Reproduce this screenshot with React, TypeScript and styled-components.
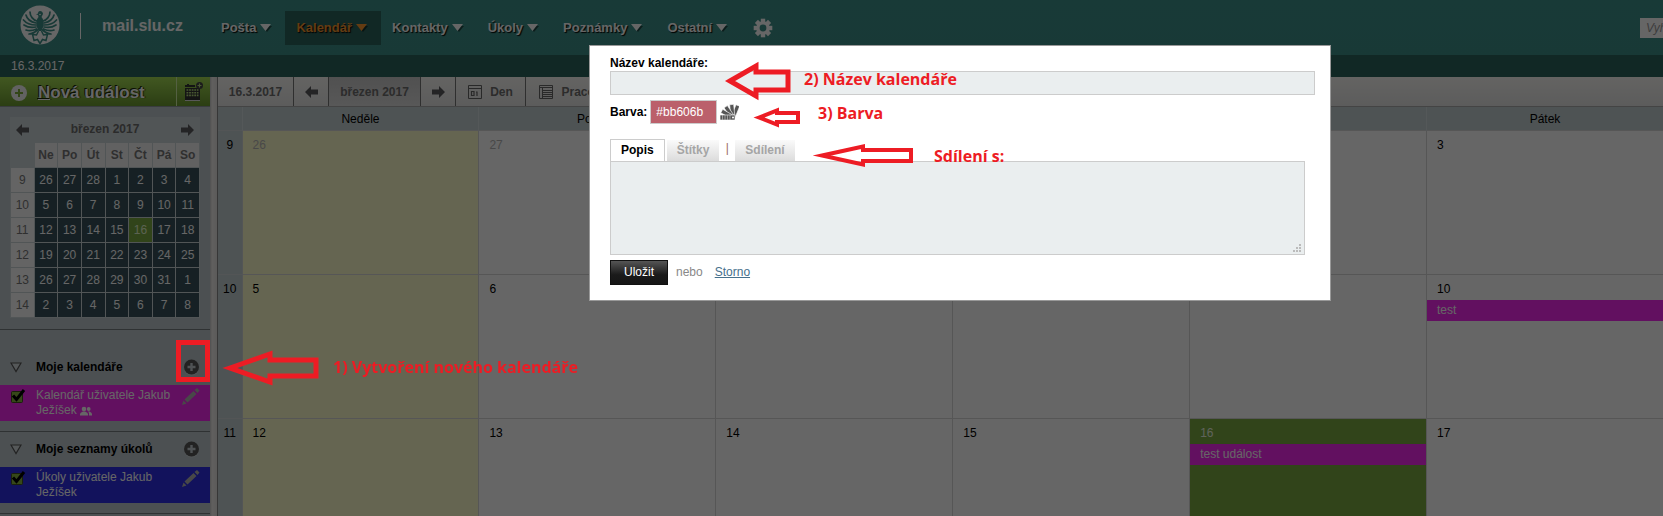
import React from 'react';
import styled, { createGlobalStyle, css } from 'styled-components';

const GlobalStyle = createGlobalStyle`
  *, *::before, *::after { box-sizing: border-box; }
  body {
    margin: 0;
    overflow: hidden;
    font-family: "Liberation Sans", Arial, sans-serif;
    font-size: 12px;
    line-height: 15px;
    color: #000;
  }
  button, input, textarea { font: inherit; }
  button { border: 0; padding: 0; background: none; cursor: pointer; }
  a { color: inherit; text-decoration: none; }
`;

const Page = styled.div`
  display: flex;
  flex-direction: column;
  height: 100vh;
  overflow: hidden;
`;

/* ---------- top bar ---------- */

const Header = styled.header`
  flex: none;
  display: flex;
  align-items: center;
  height: 55px;
  padding-left: 20px;
  background: linear-gradient(#3d918a, #3e9088);
  overflow: hidden;
`;

const Logo = styled.svg`
  flex: none;
  width: 40px;
  height: 40px;
  margin-bottom: 5px;
`;

const Brand = styled.a`
  flex: none;
  width: 130px;
  margin: 0 0 4px 20px;
  padding-left: 21px;
  border-left: 1px solid #fff;
  font-size: 16px;
  font-weight: bold;
  line-height: 26px;
  color: #fff;
`;

const Nav = styled.nav`
  display: flex;
  align-items: center;
`;

const NavItem = styled.a<{ $active?: boolean }>`
  display: flex;
  align-items: center;
  gap: 4px;
  height: 34px;
  padding: 0 13px 0 11px;
  font-size: 13px;
  font-weight: bold;
  color: #fff;
  text-shadow: 1px 1px 1px #000;
  ${(p) => p.$active && css`
    background: #2b645c;
    color: #fa962f;
  `}
`;

const SettingsButton = styled.button`
  display: flex;
  margin-left: 12px;
`;

const Search = styled.input`
  flex: none;
  width: 170px;
  height: 20px;
  margin: 0 -147px 0 auto;
  padding: 0 6px;
  border: 0;
  background: #fff;
  font-style: italic;
  &::placeholder { color: #999; opacity: 1; }
`;

const DateBar = styled.div`
  flex: none;
  height: 22px;
  padding: 4px 11px;
  background: #2c645d;
  color: #fff;
`;

const Body = styled.div`
  flex: 1;
  display: flex;
  align-items: stretch;
  min-height: 0;
`;

/* ---------- sidebar ---------- */

const Sidebar = styled.aside`
  flex: none;
  width: 210px;
  background: #bec8cd;
`;

const NewEventBar = styled.div`
  display: flex;
  height: 30px;
  border-bottom: 1px solid #8e979b;
  background: linear-gradient(#a5db54, #6c9a31);
`;

const NewEvent = styled.button`
  flex: 1;
  display: flex;
  align-items: center;
  gap: 11px;
  padding: 2px 0 0 11px;
  font-size: 17px;
  font-weight: bold;
  line-height: 20px;
  color: #fff;
  text-shadow: -1px -1px 0 #1c2a08, 1px 0 1px #2e4412;
`;

const QuickEvent = styled.button`
  display: flex;
  align-items: center;
  justify-content: center;
  width: 34px;
  border-left: 1px solid #d3efa5;
`;

const MiniCalendar = styled.section`
  margin: 10px 10px 11px;
  background: #cbd5d8;
`;

const MiniHead = styled.div`
  display: flex;
  align-items: center;
  justify-content: space-between;
  height: 25px;
  padding: 0 6px;
  font-weight: bold;
  color: #6b6b6b;
`;

const IconButton = styled.button`
  display: flex;
  flex: none;
`;

const MiniTable = styled.table`
  width: 190px;
  border-collapse: separate;
  border-spacing: 1px;
  table-layout: fixed;
  th, td { height: 24px; padding: 0; text-align: center; }
  thead th { background: #f2f2f2; color: #777; }
  thead td { background: none; }
  tbody th { background: #fafafa; color: #777; font-weight: normal; }
  tbody { background: #dadada; }
`;

const MiniDay = styled.td<{ $today?: boolean }>`
  background: ${(p) => (p.$today ? '#7aaa43' : '#37525a')};
  color: ${(p) => (p.$today ? '#e4f5cc' : '#fff')};
`;

const ListSection = styled.section<{ $first?: boolean }>`
  padding: ${(p) => (p.$first ? '20px' : '0')} 0 10px;
  border-top: 1px solid #767d80;
`;

const ListHead = styled.div`
  display: flex;
  align-items: center;
  height: 35px;
  padding: 0 10px;
`;

const ListTitle = styled.h2`
  flex: 1;
  margin: 0 0 0 14px;
  font-size: 12px;
  font-weight: bold;
`;

const ListRow = styled.div<{ $color: string }>`
  display: flex;
  align-items: flex-start;
  height: 36px;
  padding: 3px 10px;
  background: ${(p) => p.$color};
  color: #fff;
`;

const Check = styled.span`
  position: relative;
  display: flex;
  flex: none;
  width: 26px;
  height: 18px;
  svg { pointer-events: none; }
  input { position: absolute; inset: 0; width: 14px; height: 14px; margin: 0; opacity: 0; }
`;

const RowLabel = styled.label`
  flex: 1;
  svg { vertical-align: -2px; }
`;

const Resizer = styled.div`
  flex: none;
  width: 8px;
  border-right: 1px solid #8b8b8b;
  background: linear-gradient(90deg, #c9c9c9, #f2eeec 30%, #e4e2e0);
`;

/* ---------- month view ---------- */

const Main = styled.main`
  flex: 1;
  min-width: 0;
  background: #fff;
  overflow: hidden;
`;

const Toolbar = styled.div`
  display: flex;
  height: 30px;
  border-bottom: 1px solid #aaa;
  background: linear-gradient(#faf9f5, #e6e6e6);
`;

const Tool = styled.button<{ $w: number; $pressed?: boolean }>`
  flex: none;
  display: flex;
  align-items: center;
  justify-content: center;
  gap: 8px;
  width: ${(p) => p.$w}px;
  padding-top: 1px;
  border-right: 1px solid #777;
  font-weight: bold;
  color: #6e6e6e;
  white-space: nowrap;
  ${(p) => p.$pressed && css`
    background: linear-gradient(#c9c9c9, #dcdcdc);
  `}
`;

const MonthTable = styled.table`
  width: calc(100% + 1px);
  border-collapse: collapse;
  table-layout: fixed;
  thead th {
    height: 23px;
    padding: 2px 0 0;
    border-right: 1px solid #d3dcdf;
    background: #c3cfd2;
    font-weight: normal;
  }
  col:first-child { width: 24px; }
`;

const WeekNumber = styled.th`
  height: 144px;
  padding: 7px 0;
  border: 1px solid #d0d4d6;
  border-left: 0;
  background: #c3cfd2;
  font-weight: normal;
  text-align: center;
  vertical-align: top;
`;

const Day = styled.td<{ $kind?: string }>`
  height: 144px;
  padding: 0;
  border: 1px solid #d8d8d8;
  vertical-align: top;
  background: ${(p) => (p.$kind === 'today' ? '#7aaa43' : p.$kind === 'sunday' ? '#fdfdca' : '#fff')};
  color: ${(p) => (p.$kind === 'today' ? '#eef7e2' : '#000')};
`;

const DayNumber = styled.div<{ $muted?: boolean }>`
  height: 25px;
  padding: 7px 10px 0;
  color: ${(p) => (p.$muted ? '#b5b5b5' : 'inherit')};
`;

const Event = styled.a`
  display: block;
  padding: 3px 10px;
  background: #f528f0;
  color: #fff;
`;

/* ---------- dialog ---------- */

const Backdrop = styled.div`
  position: fixed;
  inset: 0;
  background: rgba(0, 0, 0, 0.6);
`;

const Dialog = styled.form`
  position: absolute;
  top: 45px;
  left: 589px;
  width: 742px;
  padding: 10px 15px 15px 20px;
  border: 1px solid #999;
  background: #fff;
`;

const FieldLabel = styled.label`
  display: block;
  font-weight: bold;
`;

const NameInput = styled.input`
  display: block;
  width: 100%;
  height: 24px;
  padding: 0 6px;
  border: 1px solid #ccc;
  background: #eaeeef;
`;

const ColorRow = styled.div`
  display: flex;
  align-items: center;
  gap: 3px;
  margin: 5px 0 15px;
`;

const ColorInput = styled.input`
  width: 67px;
  height: 24px;
  padding: 0 5px;
  border: 1px solid #ccc;
  background: #bb606b;
  color: #fff;
`;

const Tabs = styled.div`
  display: flex;
  align-items: flex-end;
  height: 22px;
`;

const Tab = styled.button<{ $active?: boolean }>`
  height: 21px;
  padding: 0 10px;
  background: linear-gradient(#fafafa, #dcdcdc);
  font-weight: bold;
  color: #a5a5a5;
  ${(p) => p.$active && css`
    height: 22px;
    margin-right: 2px;
    border: 1px solid #ccc;
    border-bottom: 0;
    background: #fff;
    color: #000;
  `}
`;

const TabSeparator = styled.span`
  width: 16px;
  padding-bottom: 5px;
  text-align: center;
  color: #9b6a6a;
`;

const DescriptionWrap = styled.div`
  position: relative;
  margin-right: 10px;
`;

const Grip = styled.svg`
  position: absolute;
  right: 4px;
  bottom: 3px;
`;

const Description = styled.textarea`
  display: block;
  width: 100%;
  height: 94px;
  border: 1px solid #ccc;
  background: #eaeeef;
  resize: none;
`;

const Actions = styled.div`
  display: flex;
  align-items: center;
  margin-top: 5px;
  color: #888;
`;

const SaveButton = styled.button`
  width: 58px;
  height: 25px;
  margin-right: 8px;
  border: 1px solid #111;
  background: linear-gradient(#555, #1a1a1a 60%, #161616);
  color: #fff;
`;

const CancelLink = styled.a`
  margin-left: 12px;
  color: #46708c;
  text-decoration: underline;
`;

/* ---------- tutorial notes over the screen ---------- */

const Note = styled.div<{ $x: number; $y: number }>`
  position: absolute;
  left: ${(p) => p.$x}px;
  top: ${(p) => p.$y}px;
  font-family: "Open Sans", "Noto Sans", sans-serif;
  font-size: 16px;
  font-weight: bold;
  line-height: 20px;
  color: #ed1c24;
  white-space: nowrap;
`;

const Marker = styled.div`
  position: absolute;
  left: 176px;
  top: 340px;
  width: 34px;
  height: 42px;
  border: 5px solid #ed1c24;
`;

const ArrowLayer = styled.svg`
  position: absolute;
  top: 0;
  left: 0;
  pointer-events: none;
`;

const Caret = () => (
  <svg width="12" height="8" viewBox="0 0 12 8" aria-hidden="true">
    <path d="M2 2h10l-5 6z" fill="#000" opacity=".5" />
    <path d="M0 0h11L5.500 7z" fill="currentColor" />
  </svg>
);

const BlockArrow = ({ flip }: { flip?: boolean }) => (
  <svg width="13" height="12" viewBox="0 0 13 12" aria-hidden="true">
    <path d={flip ? 'M13 6 7 0v3.500H0v5h7V12z' : 'M0 6l6-6v3.500h7v5H6V12z'} fill="#5a5a5e" />
  </svg>
);

const PlusCircle = () => (
  <svg width="17" height="17" viewBox="0 0 17 17" aria-hidden="true">
    <circle cx="8.500" cy="9" r="7.500" fill="#fff" opacity=".25" />
    <circle cx="8.500" cy="8" r="7.500" fill="#555" />
    <path d="M8.500 4v8M4.500 8h8" stroke="#c5ced2" strokeWidth="2.400" />
  </svg>
);

const Pencil = () => (
  <svg width="18" height="17" viewBox="0 0 18 17" aria-hidden="true">
    <path d="M0 17l1.500-4.500L4.500 15.500z M2.500 11.500 11.500 3l3 3-9 8.500z M12.500 2 15 0l2.500 2.500L15.500 5z" fill="#b4b4b4" />
  </svg>
);

const CheckIcon = () => (
  <svg width="16" height="16" viewBox="0 0 16 16" aria-hidden="true">
    <rect x="1.500" y="3.500" width="11" height="11" rx="1" fill="#88b540" stroke="#41501c" />
    <path d="M3 7.500l3.500 4L14 2" fill="none" stroke="#000" strokeWidth="3" />
  </svg>
);

const Triangle = () => (
  <svg width="12" height="11" viewBox="0 0 12 11" aria-hidden="true">
    <path d="M1 1h10L6 9.500z" fill="#d5dcdf" stroke="#555" strokeWidth="1.200" />
  </svg>
);

const People = () => (
  <svg width="12" height="10" viewBox="0 0 12 10" aria-hidden="true">
    <circle cx="4" cy="3" r="2.300" fill="#fff" />
    <path d="M0 9.500V8q0-1.500 3-2.500h2Q8 6.500 8 8v1.500z" fill="#fff" />
    <circle cx="8.700" cy="3" r="1.900" fill="#fff" />
    <path d="M9 9.500V7L8 5.500h1.500Q12 6.500 12 8v1.500z" fill="#fff" />
  </svg>
);

const Gear = () => (
  <svg width="20" height="20" viewBox="-10 -10 20 20" aria-hidden="true">
    {[0, 45, 90, 135].map((a) => (
      <rect key={a} x="-2.200" y="-9.300" width="4.400" height="18.600" fill="#fff" transform={`rotate(${a})`} />
    ))}
    <circle r="6.800" fill="#fff" />
    <circle r="3.400" fill="#3e9088" />
  </svg>
);

const Feathers = () => (
  <g stroke="#3e9088" strokeWidth="1.700" fill="none" strokeLinecap="round">
    <path d="M17 16C13 15 10 11 10 7M16 18C11 17 7 14 6 10M16 20C10 20 6 18 3.500 15M16 22C11 23 7 22 4 20M16.500 24C12 26 9 26 6 25M17.500 25C14 28 12 29 9 29" />
  </g>
);

const Eagle = () => (
  <Logo viewBox="0 0 40 40" role="img" aria-label="Slezská univerzita">
    <circle cx="20" cy="20" r="19.500" fill="#fff" />
    <Feathers />
    <g transform="translate(40 0) scale(-1 1)"><Feathers /></g>
    <path d="M20 6c2 0 3 1.500 3 3l-1.500 3c2 2 2.500 5 2 9l-2 5h-3l-2-5c-.5-4 0-7 2-9l-.5-2-2-.5 2-1c0-1.500.8-2.500 2-2.500z" fill="#3e9088" />
    <path d="M18.500 26 16.500 30l-4-.5 1.500 6 3.500-1 2.500 4 2.500-4 3.500 1 1.500-6-4 .5-2-4" fill="#fff" stroke="#3e9088" strokeWidth="1.500" />
    <circle cx="20" cy="9.500" r=".8" fill="#fff" />
  </Logo>
);

const QuickIcon = () => (
  <svg width="20" height="20" viewBox="0 0 20 20" aria-hidden="true">
    <path d="M1 5V3h2V2h2v1h6v2z" fill="#333" />
    <rect x="1" y="6" width="15" height="12" fill="#333" />
    <path d="M2.500 8h12M2.500 10.700h12M2.500 13.400h12" stroke="#b6dc7c" strokeWidth="1.600" strokeDasharray="1.800 .8" />
    <path d="M1 18.500h15" stroke="#ddd" />
    <circle cx="15.500" cy="3.500" r="3.500" fill="#444" />
    <path d="M15.500 1.500v4M13.500 3.500h4" stroke="#b6dc7c" strokeWidth="1.200" />
  </svg>
);

const DayIcon = () => (
  <svg width="14" height="14" viewBox="0 0 14 14" aria-hidden="true">
    <path d="M.5 .5h13v13H.5zM.5 3.500h13" fill="none" stroke="#666" />
    <path d="M3.500 6.500h2.500v4H3.500zM9 6.500v4.500M8 7h1" fill="none" stroke="#666" strokeWidth="1.200" />
  </svg>
);

const ListIcon = () => (
  <svg width="14" height="14" viewBox="0 0 14 14" aria-hidden="true">
    <path d="M.5 .5h13v13H.5zM.5 2.500h13M3 5.500h10M3 7.500h10M3 9.500h10M3 11.500h10M3.500 3v10" fill="none" stroke="#666" />
  </svg>
);

const Swatches = () => (
  <svg width="19" height="16" viewBox="0 0 19 16" aria-hidden="true">
    <g fill="#555" stroke="#fff" strokeWidth=".6">
      <rect x="0" y="11.500" width="12" height="4" transform="rotate(112 13 13.500)" />
      <rect x="0" y="11.500" width="12" height="4" transform="rotate(84 13 13.500)" />
      <rect x="0" y="11.500" width="12" height="4" transform="rotate(56 13 13.500)" />
      <rect x="0" y="11.500" width="12" height="4" transform="rotate(30 13 13.500)" />
      <rect x="0" y="11" width="15" height="5" />
    </g>
    <path d="M2.500 11v5M5 11v5M7.500 11v5M10 11v5" stroke="#bbb" strokeWidth=".7" />
    <circle cx="13" cy="13.500" r="1" fill="#fff" />
  </svg>
);

const NAV = ['Pošta', 'Kalendář', 'Kontakty', 'Úkoly', 'Poznámky', 'Ostatní'];
const WEEKDAYS = ['Ne', 'Po', 'Út', 'St', 'Čt', 'Pá', 'So'];
const MINI = [
  [9, 26, 27, 28, 1, 2, 3, 4],
  [10, 5, 6, 7, 8, 9, 10, 11],
  [11, 12, 13, 14, 15, 16, 17, 18],
  [12, 19, 20, 21, 22, 23, 24, 25],
  [13, 26, 27, 28, 29, 30, 31, 1],
  [14, 2, 3, 4, 5, 6, 7, 8],
];

type Cell = number | null;
const COLUMNS = ['Neděle', 'Pondělí', '', '', '', 'Pátek'];
const WEEKS: { week: number; days: Cell[] }[] = [
  { week: 9, days: [26, 27, null, null, null, 3] },
  { week: 10, days: [5, 6, null, null, null, 10] },
  { week: 11, days: [12, 13, 14, 15, 16, 17] },
];
const EVENTS: Record<number, string> = { 10: 'test', 16: 'test událost' };

/* Outline of a left-pointing block arrow. */
const arrow = (tip: number, y: number, neck: number, right: number, head: number, shaft: number) =>
  `M${tip} ${y}L${neck} ${y - head}V${y - shaft}H${right}V${y + shaft}H${neck}V${y + head}Z`;

const MiniMonth = () => (
  <MiniCalendar>
    <MiniHead>
      <IconButton aria-label="Předchozí měsíc"><BlockArrow /></IconButton>
      březen 2017
      <IconButton aria-label="Další měsíc"><BlockArrow flip /></IconButton>
    </MiniHead>
    <MiniTable>
      <thead>
        <tr><td />{WEEKDAYS.map((d) => <th key={d} scope="col">{d}</th>)}</tr>
      </thead>
      <tbody>
        {MINI.map(([week, ...days]) => (
          <tr key={week}>
            <th scope="row">{week}</th>
            {days.map((d) => <MiniDay key={d} $today={d === 16}>{d}</MiniDay>)}
          </tr>
        ))}
      </tbody>
    </MiniTable>
  </MiniCalendar>
);

type ListProps = { id: string; title: string; color: string; first?: boolean; children: React.ReactNode };

const CalendarList = ({ id, title, color, first, children }: ListProps) => (
  <ListSection $first={first}>
    <ListHead>
      <IconButton aria-label="Sbalit"><Triangle /></IconButton>
      <ListTitle>{title}</ListTitle>
      <IconButton aria-label="Přidat"><PlusCircle /></IconButton>
    </ListHead>
    <ListRow $color={color}>
      <Check><CheckIcon /><input id={id} type="checkbox" defaultChecked /></Check>
      <RowLabel htmlFor={id}>{children}</RowLabel>
      <IconButton aria-label="Upravit"><Pencil /></IconButton>
    </ListRow>
  </ListSection>
);

const Month = () => (
  <MonthTable>
    <colgroup><col />{COLUMNS.map((_, i) => <col key={i} />)}</colgroup>
    <thead>
      <tr><th />{COLUMNS.map((c, i) => <th key={i} scope="col">{c}</th>)}</tr>
    </thead>
    <tbody>
      {WEEKS.map(({ week, days }) => (
        <tr key={week}>
          <WeekNumber scope="row">{week}</WeekNumber>
          {days.map((d, i) => (
            <Day key={i} $kind={d === 16 ? 'today' : i === 0 ? 'sunday' : undefined}>
              {d !== null && <DayNumber $muted={d > 20}>{d}</DayNumber>}
              {d !== null && EVENTS[d] && <Event href="#">{EVENTS[d]}</Event>}
            </Day>
          ))}
        </tr>
      ))}
    </tbody>
  </MonthTable>
);

export default function App() {
  return (
    <>
      <GlobalStyle />
      <Page>
        <Header>
          <Eagle />
          <Brand href="#">mail.slu.cz</Brand>
          <Nav>
            {NAV.map((n) => (
              <NavItem key={n} href="#" $active={n === 'Kalendář'}>{n}<Caret /></NavItem>
            ))}
            <SettingsButton aria-label="Nastavení"><Gear /></SettingsButton>
          </Nav>
          <Search placeholder="Vyhledat" aria-label="Vyhledat" />
        </Header>
        <DateBar>16.3.2017</DateBar>
        <Body>
          <Sidebar>
            <NewEventBar>
              <NewEvent>
                <svg width="16" height="16" viewBox="0 0 16 16" aria-hidden="true">
                  <circle cx="8" cy="8" r="8" fill="#f4f4f4" />
                  <path d="M8 4v8M4 8h8" stroke="#7fae3c" strokeWidth="2" />
                </svg>
                <span><u>N</u>ová událost</span>
              </NewEvent>
              <QuickEvent aria-label="Rychlá událost"><QuickIcon /></QuickEvent>
            </NewEventBar>
            <MiniMonth />
            <CalendarList id="cal" title="Moje kalendáře" color="#f528f0" first>
              Kalendář uživatele Jakub Ježíšek <People />
            </CalendarList>
            <CalendarList id="tasks" title="Moje seznamy úkolů" color="#2d2de6">
              Úkoly uživatele Jakub Ježíšek
            </CalendarList>
            <ListSection />
          </Sidebar>
          <Resizer />
          <Main>
            <Toolbar>
              <Tool $w={76}>16.3.2017</Tool>
              <Tool $w={35} aria-label="Předchozí"><BlockArrow /></Tool>
              <Tool $w={92} $pressed>březen 2017</Tool>
              <Tool $w={35} aria-label="Další"><BlockArrow flip /></Tool>
              <Tool $w={70}><DayIcon />Den</Tool>
              <Tool $w={136}><ListIcon />Pracovní týden</Tool>
            </Toolbar>
            <Month />
          </Main>
        </Body>
      </Page>

      <Backdrop>
        <Dialog onSubmit={(e) => e.preventDefault()}>
          <FieldLabel htmlFor="name">Název kalendáře:</FieldLabel>
          <NameInput id="name" type="text" />
          <ColorRow>
            <FieldLabel htmlFor="color">Barva:</FieldLabel>
            <ColorInput id="color" type="text" defaultValue="#bb606b" />
            <IconButton type="button" aria-label="Vybrat barvu"><Swatches /></IconButton>
          </ColorRow>
          <Tabs role="tablist">
            <Tab type="button" role="tab" aria-selected $active>Popis</Tab>
            <Tab type="button" role="tab">Štítky</Tab>
            <TabSeparator>|</TabSeparator>
            <Tab type="button" role="tab">Sdílení</Tab>
          </Tabs>
          <DescriptionWrap>
            <Description aria-label="Popis" />
            <Grip width="8" height="8" viewBox="0 0 8 8" aria-hidden="true">
              <path d="M6 0h2v2H6zM3 3h2v2H3zM6 3h2v2H6zM0 6h2v2H0zM3 6h2v2H3zM6 6h2v2H6z" fill="#bbb" />
            </Grip>
          </DescriptionWrap>
          <Actions>
            <SaveButton type="submit">Uložit</SaveButton>
            nebo
            <CancelLink href="#">Storno</CancelLink>
          </Actions>
        </Dialog>
        <Marker />
        <ArrowLayer width="930" height="400" viewBox="0 0 930 400" aria-hidden="true">
          <g fill="none" stroke="#ed1c24" strokeWidth="4" strokeMiterlimit="10">
            <path d={arrow(230, 368, 270, 316, 14, 8)} strokeWidth="5" />
            <path d={arrow(730, 81, 756, 788, 15, 9)} strokeWidth="5" />
            <path d={arrow(759, 117.5, 777, 798, 7, 4.5)} />
            <path d={arrow(822, 155.5, 863, 911, 9, 5.5)} />
          </g>
        </ArrowLayer>
        <Note $x={333} $y={357}>1) Vytvoření nového kalendáře</Note>
        <Note $x={804} $y={69}>2) Název kalendáře</Note>
        <Note $x={818} $y={103}>3) Barva</Note>
        <Note $x={934} $y={146}>Sdílení s:</Note>
      </Backdrop>
    </>
  );
}
